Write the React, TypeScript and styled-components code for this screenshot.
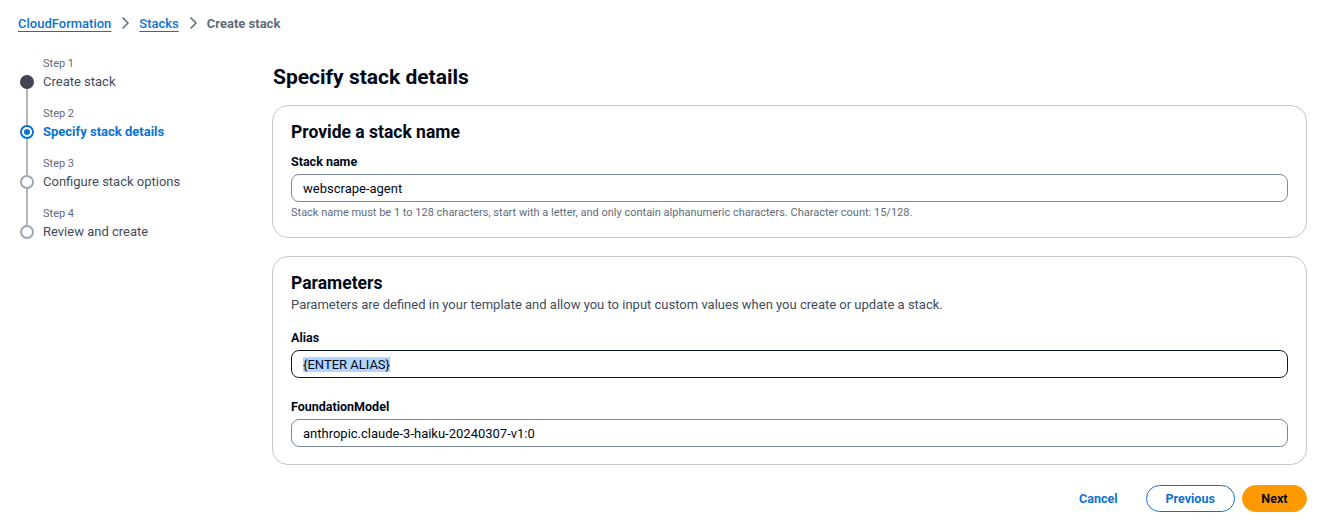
import React from "react";
import styled, { createGlobalStyle } from "styled-components";

const Global = createGlobalStyle`
  html, body { margin: 0; padding: 0; background: #ffffff; }
  body {
    font-family: Roboto, "Open Sans", "Liberation Sans", sans-serif;
    color: #0f141a;
    -webkit-font-smoothing: antialiased;
  }
  * { box-sizing: border-box; }
`;

const Page = styled.div`
  width: 1329px;
  height: 531px;
  padding: 13px 22px 0 18px;
`;

const Breadcrumbs = styled.nav`
  display: flex;
  align-items: center;
  gap: 9px;
  height: 20px;
  font-size: 13px;
`;

const Crumb = styled.a`
  color: #0972d3;
  font-weight: 500;
  text-decoration: underline;
  text-underline-offset: 3px;
  text-decoration-thickness: 1px;
`;

const CurrentCrumb = styled.span`
  color: #5f6b7a;
  font-weight: 700;
`;

const Layout = styled.div`
  display: grid;
  grid-template-columns: 254px 1fr;
  margin-top: 21px;
`;

const StepList = styled.ol`
  list-style: none;
  margin: 0;
  padding: 0;
`;

const Step = styled.li`
  position: relative;
  display: grid;
  grid-template-columns: 25px 1fr;
  height: 50px;
`;

const Rail = styled.div<{ $last?: boolean }>`
  position: relative;
  &::after {
    content: "";
    display: ${(p) => (p.$last ? "none" : "block")};
    position: absolute;
    left: 7.5px;
    top: 33px;
    width: 2px;
    height: 42px;
    background: #b4b4bb;
  }
`;

const Dot = styled.span<{ $state: "done" | "active" | "todo" }>`
  position: absolute;
  left: 1.5px;
  top: 20.5px;
  width: 14px;
  height: 14px;
  border-radius: 50%;
  z-index: 1;
  background: ${(p) => (p.$state === "done" ? "#424650" : "#ffffff")};
  border: 2px solid
    ${(p) =>
      p.$state === "done" ? "#424650" : p.$state === "active" ? "#0972d3" : "#9ba7b6"};
  &::after {
    content: "";
    display: ${(p) => (p.$state === "active" ? "block" : "none")};
    position: absolute;
    left: 2px;
    top: 2px;
    width: 6px;
    height: 6px;
    border-radius: 50%;
    background: #0972d3;
  }
`;

const StepText = styled.div`
  display: flex;
  flex-direction: column;
`;

const StepLabel = styled.span`
  font-size: 11px;
  line-height: 16px;
  color: #5f6b7a;
  margin-top: 2px;
`;

const StepTitle = styled.span<{ $active?: boolean }>`
  font-size: 13px;
  line-height: 20px;
  color: ${(p) => (p.$active ? "#0972d3" : "#414d5c")};
  font-weight: ${(p) => (p.$active ? 700 : 400)};
`;

const Main = styled.main`
  display: flex;
  flex-direction: column;
`;

const PageTitle = styled.h1`
  margin: 9px 0 0 1px;
  font-size: 21px;
  line-height: 28px;
  font-weight: 700;
  color: #000716;
`;

const Card = styled.section`
  margin-top: 14px;
  border: 1px solid #c6c6cd;
  border-radius: 16px;
  padding: 14px 18px 17px 18px;
  display: flex;
  flex-direction: column;
  & + & { margin-top: 18px; }
`;

const CardTitle = styled.h2`
  margin: 0;
  font-size: 17.5px;
  line-height: 24px;
  font-weight: 700;
  color: #000716;
`;

const CardDesc = styled.p`
  margin: 1px 0 0 0;
  font-size: 13px;
  line-height: 18px;
  color: #414d5c;
`;

const Field = styled.div<{ $spacing: number }>`
  display: flex;
  flex-direction: column;
  margin-top: ${(p) => p.$spacing}px;
`;

const Label = styled.label`
  font-size: 12.5px;
  line-height: 18px;
  font-weight: 700;
  color: #000716;
  margin-bottom: 3px;
`;

const InputBox = styled.div<{ $focused?: boolean }>`
  height: 28px;
  border: 1px solid ${(p) => (p.$focused ? "#0f1b2a" : "#7d8998")};
  border-radius: 8px;
  padding: 0 11px;
  display: flex;
  align-items: center;
  font-size: 13px;
  color: #000716;
`;

const Selected = styled.span`
  background: #b4d5fe;
`;

const Hint = styled.span`
  margin-top: 4px;
  font-size: 11px;
  line-height: 14px;
  color: #5f6b7a;
`;

const Actions = styled.div`
  display: flex;
  justify-content: flex-end;
  align-items: center;
  margin-top: 20px;
  gap: 7px;
`;

const LinkButton = styled.button`
  background: none;
  border: none;
  color: #0972d3;
  font: inherit;
  font-size: 12.5px;
  font-weight: 700;
  padding: 0 14px;
  margin-right: 7px;
  height: 26px;
`;

const Button = styled.button<{ $primary?: boolean }>`
  height: 27px;
  border-radius: 14px;
  padding: 0 ${(p) => (p.$primary ? "18.5px" : "19px")};
  font: inherit;
  font-size: 12.5px;
  font-weight: 700;
  border: 1.5px solid ${(p) => (p.$primary ? "#ff9900" : "#0972d3")};
  background: ${(p) => (p.$primary ? "#ff9900" : "#ffffff")};
  color: ${(p) => (p.$primary ? "#000716" : "#0972d3")};
`;

const Chevron = () => (
  <svg width="10" height="14" viewBox="0 0 10 14" fill="none">
    <path d="M2.5 1.5 L8 7 L2.5 12.5" stroke="#5f6b7a" strokeWidth="1.5" />
  </svg>
);

const steps = [
  { label: "Step 1", title: "Create stack", state: "done" as const },
  { label: "Step 2", title: "Specify stack details", state: "active" as const },
  { label: "Step 3", title: "Configure stack options", state: "todo" as const },
  { label: "Step 4", title: "Review and create", state: "todo" as const },
];

export default function App() {
  return (
    <>
      <Global />
      <Page>
        <Breadcrumbs>
          <Crumb>CloudFormation</Crumb>
          <Chevron />
          <Crumb>Stacks</Crumb>
          <Chevron />
          <CurrentCrumb>Create stack</CurrentCrumb>
        </Breadcrumbs>
        <Layout>
          <StepList>
            {steps.map((s, i) => (
              <Step key={s.label}>
                <Rail $last={i === steps.length - 1}>
                  <Dot $state={s.state} />
                </Rail>
                <StepText>
                  <StepLabel>{s.label}</StepLabel>
                  <StepTitle $active={s.state === "active"}>{s.title}</StepTitle>
                </StepText>
              </Step>
            ))}
          </StepList>
          <Main>
            <PageTitle>Specify stack details</PageTitle>
            <Card>
              <CardTitle>Provide a stack name</CardTitle>
              <Field $spacing={9}>
                <Label>Stack name</Label>
                <InputBox>webscrape-agent</InputBox>
                <Hint>
                  Stack name must be 1 to 128 characters, start with a letter, and only contain
                  alphanumeric characters. Character count: 15/128.
                </Hint>
              </Field>
            </Card>
            <Card>
              <CardTitle>Parameters</CardTitle>
              <CardDesc>
                Parameters are defined in your template and allow you to input custom values when
                you create or update a stack.
              </CardDesc>
              <Field $spacing={15}>
                <Label>Alias</Label>
                <InputBox $focused>
                  <Selected>{"{ENTER ALIAS}"}</Selected>
                </InputBox>
              </Field>
              <Field $spacing={20}>
                <Label>FoundationModel</Label>
                <InputBox>anthropic.claude-3-haiku-20240307-v1:0</InputBox>
              </Field>
            </Card>
            <Actions>
              <LinkButton>Cancel</LinkButton>
              <Button>Previous</Button>
              <Button $primary>Next</Button>
            </Actions>
          </Main>
        </Layout>
      </Page>
    </>
  );
}
